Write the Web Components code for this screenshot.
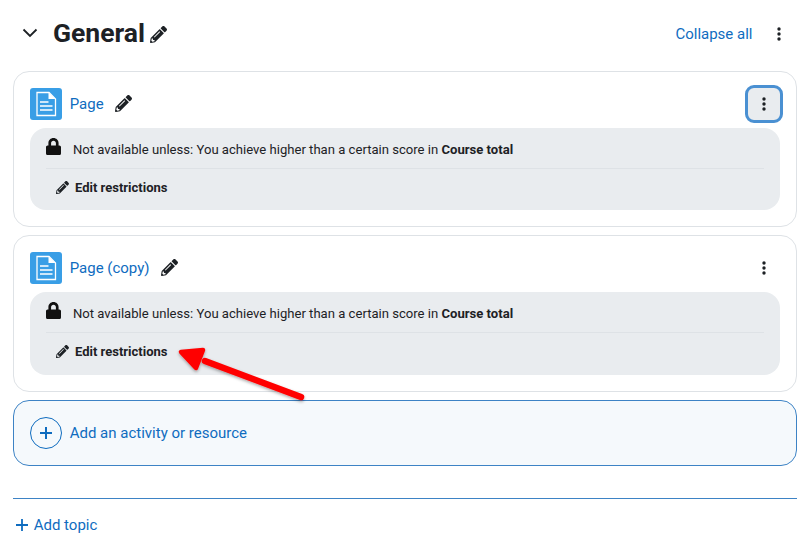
<!DOCTYPE html>
<html>
<head>
<meta charset="utf-8">
<title>General</title>
<style>
  html, body { margin: 0; background: #fff; }
  body { position: relative; width: 808px; height: 545px; overflow: hidden; font-family: Roboto, "Liberation Sans", sans-serif; color: #1d2125; }
  .page { padding: 0 11px 0 13px; display: flex; flex-direction: column; }
  .arrow { position: absolute; left: 170px; top: 340px; }
</style>
</head>
<body>
<div class="page">
  <section-header></section-header>
  <activity-card name="Page" focused></activity-card>
  <activity-card name="Page (copy)"></activity-card>
  <add-activity></add-activity>
  <add-topic></add-topic>
</div>
<svg class="arrow" width="145" height="70" viewBox="170 340 145 70">
  <defs><filter id="s" x="-20%" y="-20%" width="140%" height="140%"><feDropShadow dx="0" dy="1.5" stdDeviation="1.500" flood-color="#000" flood-opacity=".35"/></filter></defs>
  <g filter="url(#s)" fill="#f00" stroke="#f00" stroke-linejoin="round" stroke-linecap="round">
    <path d="M301 397L205 361" stroke-width="6.500" fill="none"/>
    <path d="M181 352L203 350L196 368Z" stroke-width="4.500"/>
  </g>
</svg>
<script>
const PENCIL = `<svg viewBox="0 0 512 512" fill="currentColor"><path d="M497.900 142.100l-46.100 46.100c-4.700 4.700-12.300 4.700-17 0l-111-111c-4.700-4.700-4.700-12.300 0-17l46.100-46.100c18.700-18.700 49.100-18.700 67.900 0l60.100 60.100c18.800 18.700 18.800 49.100 0 67.900zM284.200 99.800L21.600 362.400.4 483.900c-2.900 16.400 11.400 30.600 27.800 27.800l121.500-21.300 262.600-262.600c4.200-4.200 4.200-11 0-15.100L299.400 99.800c-4.200-4.200-11-4.200-15.200 0zM124.100 339.900c-5.500-5.500-5.500-14.300 0-19.800l154-154c5.500-5.500 14.300-5.500 19.800 0s5.500 14.300 0 19.800l-154 154c-5.500 5.500-14.300 5.500-19.800 0zM88 424h48v36.300l-64.500 11.300-31.100-31.100L51.700 376H88v48z"/></svg>`;
const KEBAB = `<svg viewBox="0 0 4 14" fill="currentColor"><circle cx="2" cy="2" r="1.700"/><circle cx="2" cy="7" r="1.700"/><circle cx="2" cy="12" r="1.700"/></svg>`;
const LOCK = `<svg viewBox="0 0 448 512" fill="currentColor"><path d="M400 224h-24v-72C376 68.200 307.800 0 224 0S72 68.200 72 152v72H48c-26.500 0-48 21.500-48 48v192c0 26.500 21.500 48 48 48h352c26.500 0 48-21.500 48-48V272c0-26.500-21.500-48-48-48zm-104 0H152v-72c0-39.700 32.300-72 72-72s72 32.300 72 72v72z"/></svg>`;
const DOC = `<svg viewBox="0 0 32 32"><rect width="32" height="32" rx="3" fill="#399ee6"/><path d="M7 4.500h12l6.500 6.500v16.500H7z" fill="none" stroke="#fff" stroke-width="1.300"/><path d="M18.500 4.500v6.500h7z" fill="#fff"/><path d="M10 14h8.500M10 18h12.500M10 22h12.500" stroke="#fff" stroke-width="1.300"/></svg>`;

customElements.define('section-header', class extends HTMLElement {
  constructor() {
    super();
    this.attachShadow({mode: 'open'}).innerHTML = `
<style>
  :host { display: flex; align-items: center; height: 71px; box-sizing: border-box; padding: 0 16.500px 5px 9px; }
  .chev { width: 16px; height: 10px; margin-right: 15px; }
  h2 { margin: 0; font: 700 26.500px/1 Roboto, sans-serif; color: #1d2125; }
  .edit { width: 17px; height: 17px; margin-left: 5px; margin-top: 3px; }
  .edit svg { display: block; }
  a { margin-left: auto; margin-top: 2px; font-size: 15px; color: #0f6cbf; }
  .more { width: 4px; height: 14px; margin-left: 24px; margin-top: 1px; color: #1d2125; }
  .more svg { display: block; }
</style>
<svg class="chev" viewBox="0 0 16 10" fill="none" stroke="#1d2125" stroke-width="1.800"><path d="M1.500 1.500L8 8l6.500-6.500"/></svg>
<h2>General</h2>
<span class="edit">${PENCIL}</span>
<a>Collapse all</a>
<span class="more">${KEBAB}</span>`;
  }
});

customElements.define('activity-card', class extends HTMLElement {
  constructor() {
    super();
    this.attachShadow({mode: 'open'}).innerHTML = `
<style>
  :host { display: block; box-sizing: border-box; height: 156.400px; margin-bottom: 8px; border: 1px solid #dee2e6; border-radius: 16px; padding: 16px 16px 0; }
  .top { display: flex; align-items: center; height: 32px; margin-bottom: 8px; }
  .doc { width: 32px; height: 32px; }
  .doc svg { display: block; }
  a { margin-left: 7.700px; font-size: 15px; color: #0f6cbf; }
  .edit { width: 17px; height: 17px; margin-left: 11px; margin-top: -2px; }
  .edit svg { display: block; }
  .more { margin-left: auto; margin-right: -3px; width: 38px; height: 38px; box-sizing: border-box; display: flex; align-items: center; justify-content: center; border-radius: 9px; flex: none; }
  .more svg { width: 4px; height: 14px; margin-left: -1px; }
  :host([focused]) .more { background: #e9ecef; border: 3px solid #4a90d2; }
</style>
<div class="top">
  <span class="doc">${DOC}</span>
  <a>${this.getAttribute('name')}</a>
  <span class="edit">${PENCIL}</span>
  <span class="more">${KEBAB}</span>
</div>
<availability-box></availability-box>`;
  }
});

customElements.define('availability-box', class extends HTMLElement {
  constructor() {
    super();
    this.attachShadow({mode: 'open'}).innerHTML = `
<style>
  :host { display: block; box-sizing: border-box; height: 82.400px; background: #e9ecef; border-radius: 16px; padding: 0 16px; font-size: 13.100px; color: #1d2125; }
  .msg { display: flex; align-items: center; height: 38px; padding-top: 2px; border-bottom: 1px solid #dee2e6; }
  .lock { width: 15px; height: 17px; margin-right: 12px; margin-top: -6px; color: #111; }
  .lock svg { display: block; }
  .edit { display: flex; align-items: center; height: 36px; padding-left: 10px; font-weight: 700; font-size: 13px; }
  .edit span { width: 13px; height: 13px; margin-right: 6px; }
  .edit svg { display: block; }
</style>
<div class="msg"><span class="lock">${LOCK}</span><div>Not available unless: You achieve higher than a certain score in <b>Course total</b></div></div>
<div class="edit"><span>${PENCIL}</span>Edit restrictions</div>`;
  }
});

customElements.define('add-activity', class extends HTMLElement {
  constructor() {
    super();
    this.attachShadow({mode: 'open'}).innerHTML = `
<style>
  :host { display: flex; align-items: center; box-sizing: border-box; height: 66px; border: 1px solid #3d83c5; border-radius: 16px; background: #f5f9fc; padding: 0 16px; color: #0f6cbf; font-size: 15px; }
  .c { width: 32px; height: 32px; box-sizing: border-box; border: 1px solid #0f6cbf; border-radius: 50%; display: flex; align-items: center; justify-content: center; margin-right: 7.700px; }
  svg { display: block; width: 14px; height: 14px; }
</style>
<span class="c"><svg viewBox="0 0 14 14" stroke="#0f6cbf" stroke-width="2"><path d="M7 1v12M1 7h12"/></svg></span>
<span>Add an activity or resource</span>`;
  }
});

customElements.define('add-topic', class extends HTMLElement {
  constructor() {
    super();
    this.attachShadow({mode: 'open'}).innerHTML = `
<style>
  :host { display: flex; align-items: center; box-sizing: border-box; height: 53px; margin-top: 32px; border-top: 1px solid #3d83c5; padding-left: 3px; color: #0f6cbf; font-size: 15px; }
  svg { display: block; width: 12px; height: 12px; margin-right: 5.700px; }
</style>
<svg viewBox="0 0 12 12" stroke="#0f6cbf" stroke-width="1.800"><path d="M6 0v12M0 6h12"/></svg>
<span>Add topic</span>`;
  }
});
</script>
</body>
</html>
